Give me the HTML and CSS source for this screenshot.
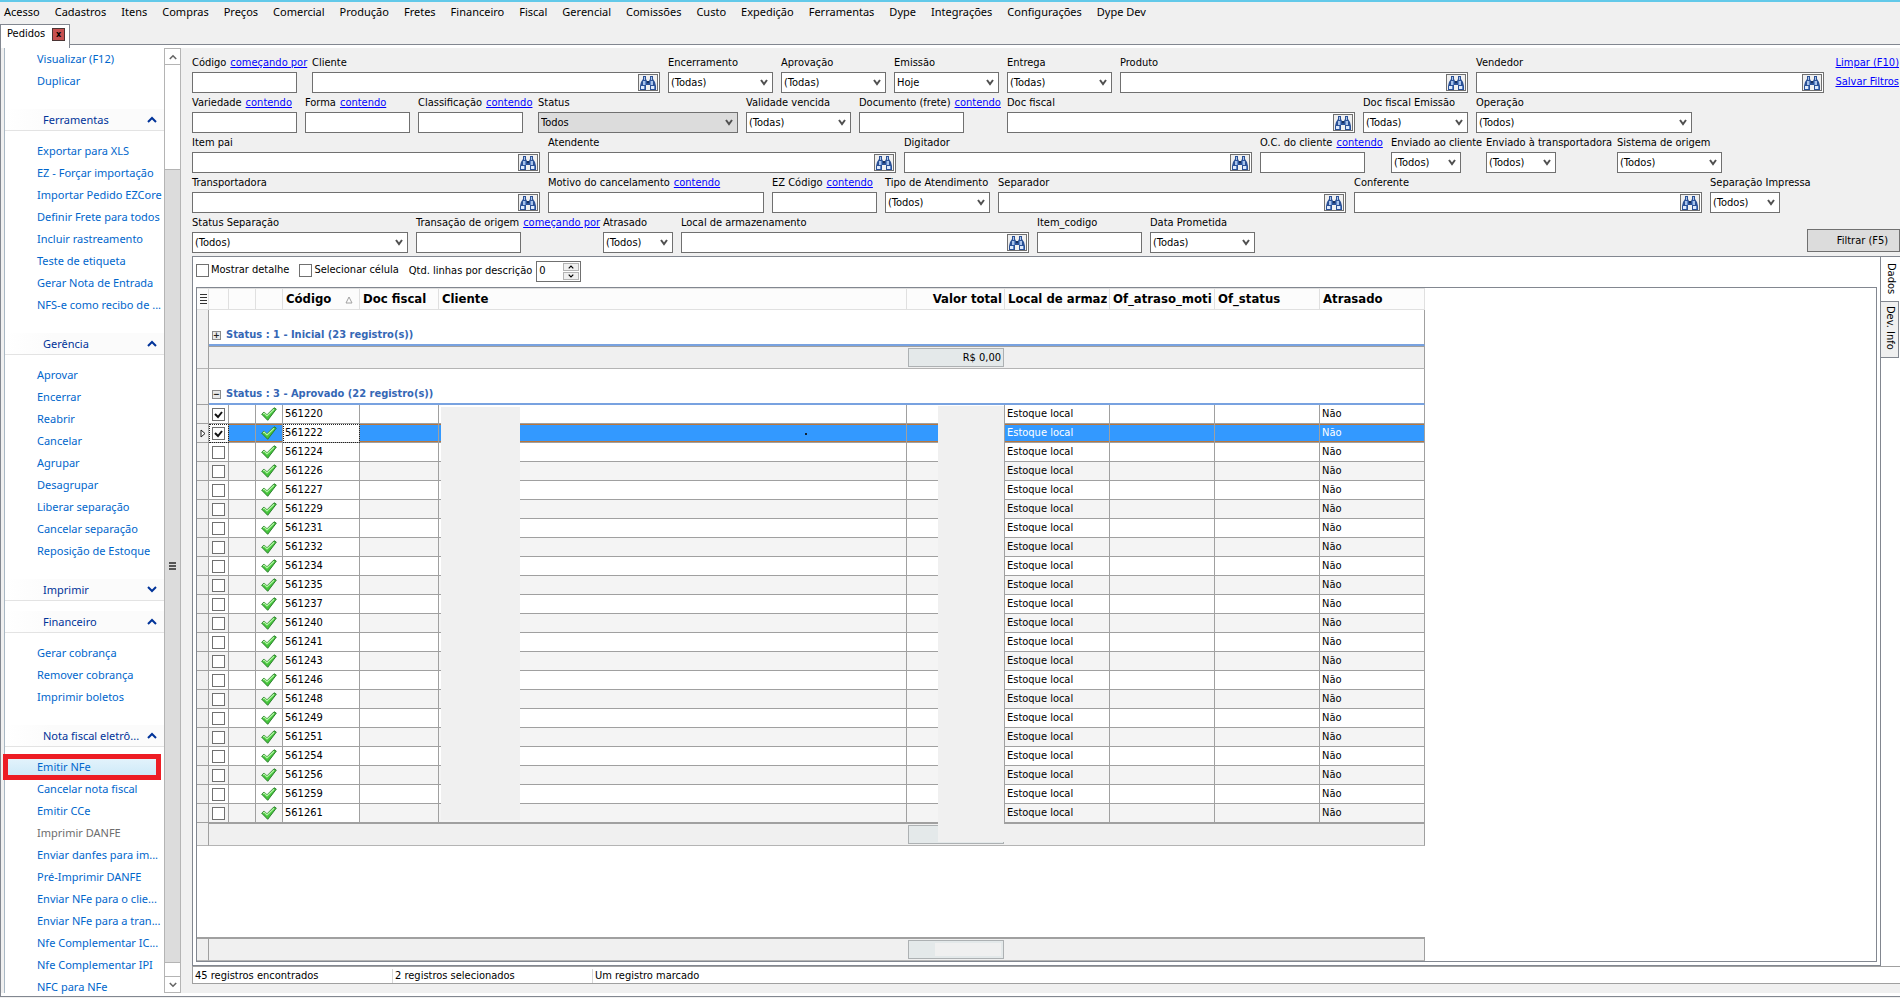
FILE: index.html
```html
<!DOCTYPE html>
<html lang="pt-BR">
<head>
<meta charset="utf-8">
<title>Pedidos</title>
<link rel="stylesheet" href="styles.css">
</head>
<body>
<svg class="defs" aria-hidden="true">
  <symbol id="find" viewBox="0 0 16 14">
    <path d="M3 0h3v3l1 2h2l1-2V0h3v3l2 3 1 4v4h-6V9H6v5H0v-4l1-4 2-3z" fill="#2b5196"/>
    <path d="M4 1h1v3H4zM11 1h1v3h-1zM3 5h2v4H3zM11 5h2v4h-2z" fill="#a9c3ea"/>
    <path d="M1 10h3v3H1zM11 10h3v3h-3z" fill="#dfeafb"/>
    <path d="M4 10h1v3H4zM14 10h1v3h-1zM5 5h1v4H5zM10 5h1v4h-1z" fill="#5c86c8"/>
    <path d="M7 5h2v2H7z" fill="#16305f"/>
  </symbol>
  <symbol id="ok" viewBox="0 0 16 14">
    <path d="M.7 7.200 3 5l3 2.800L13 .8l2.300 1.300L6.700 13.300z" fill="#46c63c" stroke="#2a7d2c" stroke-width="1" stroke-linejoin="round"/>
    <path d="M2 7l1.200-.9L6 9l7-6.800" fill="none" stroke="#b4f5a6" stroke-width="1.200"/>
  </symbol>
  <symbol id="up" viewBox="0 0 10 7"><path d="M1 6l4-4 4 4" fill="none" stroke="currentColor" stroke-width="2"/></symbol>
  <symbol id="down" viewBox="0 0 10 7"><path d="M1 1l4 4 4-4" fill="none" stroke="currentColor" stroke-width="2"/></symbol>
</svg>

<nav class="menu">
  <button>Acesso</button><button>Cadastros</button><button>Itens</button><button>Compras</button><button>Preços</button><button>Comercial</button><button>Produção</button><button>Fretes</button><button>Financeiro</button><button>Fiscal</button><button>Gerencial</button><button>Comissões</button><button>Custo</button><button>Expedição</button><button>Ferramentas</button><button>Dype</button><button>Integrações</button><button>Configurações</button><button>Dype Dev</button>
</nav>
<div class="tabs">
  <div class="tab">Pedidos <button class="close" aria-label="Fechar">x</button></div>
</div>

<div class="frame">
  <aside class="side">
    <div class="side-list">
      <ul class="first"><li><a href="#">Visualizar (F12)</a></li><li><a href="#">Duplicar</a></li></ul>
      <button class="sec"><span>Ferramentas</span><svg><use href="#up"/></svg></button>
      <ul>
        <li><a href="#">Exportar para XLS</a></li><li><a href="#">EZ - Forçar importação</a></li><li><a href="#">Importar Pedido EZCore</a></li><li><a href="#">Definir Frete para todos</a></li><li><a href="#">Incluir rastreamento</a></li><li><a href="#">Teste de etiqueta</a></li><li><a href="#">Gerar Nota de Entrada</a></li><li><a href="#">NFS-e como recibo de ...</a></li>
      </ul>
      <button class="sec"><span>Gerência</span><svg><use href="#up"/></svg></button>
      <ul>
        <li><a href="#">Aprovar</a></li><li><a href="#">Encerrar</a></li><li><a href="#">Reabrir</a></li><li><a href="#">Cancelar</a></li><li><a href="#">Agrupar</a></li><li><a href="#">Desagrupar</a></li><li><a href="#">Liberar separação</a></li><li><a href="#">Cancelar separação</a></li><li><a href="#">Reposição de Estoque</a></li>
      </ul>
      <button class="sec closed"><span>Imprimir</span><svg><use href="#down"/></svg></button>
      <button class="sec"><span>Financeiro</span><svg><use href="#up"/></svg></button>
      <ul>
        <li><a href="#">Gerar cobrança</a></li><li><a href="#">Remover cobrança</a></li><li><a href="#">Imprimir boletos</a></li>
      </ul>
      <button class="sec"><span>Nota fiscal eletrô...</span><svg><use href="#up"/></svg></button>
      <ul>
        <li class="hot"><a href="#">Emitir NFe</a></li><li><a href="#">Cancelar nota fiscal</a></li><li><a href="#">Emitir CCe</a></li><li class="off"><a href="#">Imprimir DANFE</a></li><li><a href="#">Enviar danfes para im...</a></li><li><a href="#">Pré-Imprimir DANFE</a></li><li><a href="#">Enviar NFe para o clie...</a></li><li><a href="#">Enviar NFe para a tran...</a></li><li><a href="#">Nfe Complementar IC...</a></li><li><a href="#">Nfe Complementar IPI</a></li><li><a href="#">NFC para NFe</a></li>
      </ul>
    </div>
    <div class="scroll">
      <button aria-label="Subir"><svg><use href="#up"/></svg></button>
      <div class="track"><div class="thumb"><i></i></div></div>
      <button aria-label="Descer"><svg><use href="#down"/></svg></button>
    </div>
  </aside>

  <main>
    <form class="filters">
      <div class="frow">
        <div class="f s112"><div class="cap"><label for="a1">Código</label><a href="#">começando por</a></div><input id="a1" class="w105"></div>
        <div class="f"><div class="cap"><label for="a2">Cliente</label></div><div class="look"><input id="a2"><button type="button" aria-label="Buscar"><svg><use href="#find"/></svg></button></div></div>
        <div class="f"><div class="cap"><label for="a3">Encerramento</label></div><select id="a3" class="w105"><option>(Todas)</option></select></div>
        <div class="f"><div class="cap"><label for="a4">Aprovação</label></div><select id="a4" class="w105"><option>(Todas)</option></select></div>
        <div class="f"><div class="cap"><label for="a5">Emissão</label></div><select id="a5" class="w105"><option>Hoje</option></select></div>
        <div class="f"><div class="cap"><label for="a6">Entrega</label></div><select id="a6" class="w105"><option>(Todas)</option></select></div>
        <div class="f"><div class="cap"><label for="a7">Produto</label></div><div class="look"><input id="a7"><button type="button" aria-label="Buscar"><svg><use href="#find"/></svg></button></div></div>
        <div class="f"><div class="cap"><label for="a8">Vendedor</label></div><div class="look"><input id="a8"><button type="button" aria-label="Buscar"><svg><use href="#find"/></svg></button></div></div>
        <div class="acts"><a href="#">Limpar (F10)</a><a href="#">Salvar Filtros</a></div>
      </div>
      <div class="frow">
        <div class="f s105"><div class="cap"><label for="b1">Variedade</label><a href="#">contendo</a></div><input id="b1" class="w105"></div>
        <div class="f s105"><div class="cap"><label for="b2">Forma</label><a href="#">contendo</a></div><input id="b2" class="w105"></div>
        <div class="f s112"><div class="cap"><label for="b3">Classificação</label><a href="#">contendo</a></div><input id="b3" class="w105"></div>
        <div class="f"><div class="cap"><label for="b4">Status</label></div><select id="b4" class="w200 gray"><option>Todos</option></select></div>
        <div class="f"><div class="cap"><label for="b5">Validade vencida</label></div><select id="b5" class="w105"><option>(Todas)</option></select></div>
        <div class="f s140"><div class="cap"><label for="b6">Documento (frete)</label><a href="#">contendo</a></div><input id="b6" class="w105"></div>
        <div class="f"><div class="cap"><label for="b7">Doc fiscal</label></div><div class="look"><input id="b7"><button type="button" aria-label="Buscar"><svg><use href="#find"/></svg></button></div></div>
        <div class="f s105"><div class="cap"><label for="b8">Doc fiscal Emissão</label></div><select id="b8" class="w105"><option>(Todas)</option></select></div>
        <div class="f"><div class="cap"><label for="b9">Operação</label></div><select id="b9" class="w216"><option>(Todos)</option></select></div>
      </div>
      <div class="frow">
        <div class="f"><div class="cap"><label for="c1">Item pai</label></div><div class="look"><input id="c1"><button type="button" aria-label="Buscar"><svg><use href="#find"/></svg></button></div></div>
        <div class="f"><div class="cap"><label for="c2">Atendente</label></div><div class="look"><input id="c2"><button type="button" aria-label="Buscar"><svg><use href="#find"/></svg></button></div></div>
        <div class="f"><div class="cap"><label for="c3">Digitador</label></div><div class="look"><input id="c3"><button type="button" aria-label="Buscar"><svg><use href="#find"/></svg></button></div></div>
        <div class="f s123"><div class="cap"><label for="c4">O.C. do cliente</label><a href="#">contendo</a></div><input id="c4" class="w105"></div>
        <div class="f s87"><div class="cap"><label for="c5">Enviado ao cliente</label></div><select id="c5" class="w70"><option>(Todos)</option></select></div>
        <div class="f s123"><div class="cap"><label for="c6">Enviado à transportadora</label></div><select id="c6" class="w70"><option>(Todos)</option></select></div>
        <div class="f"><div class="cap"><label for="c7">Sistema de origem</label></div><select id="c7" class="w105"><option>(Todos)</option></select></div>
      </div>
      <div class="frow">
        <div class="f"><div class="cap"><label for="d1">Transportadora</label></div><div class="look"><input id="d1"><button type="button" aria-label="Buscar"><svg><use href="#find"/></svg></button></div></div>
        <div class="f"><div class="cap"><label for="d2">Motivo do cancelamento</label><a href="#">contendo</a></div><input id="d2" class="w216"></div>
        <div class="f s105"><div class="cap"><label for="d3">EZ Código</label><a href="#">contendo</a></div><input id="d3" class="w105"></div>
        <div class="f s105"><div class="cap"><label for="d4">Tipo de Atendimento</label></div><select id="d4" class="w105"><option>(Todos)</option></select></div>
        <div class="f"><div class="cap"><label for="d5">Separador</label></div><div class="look"><input id="d5"><button type="button" aria-label="Buscar"><svg><use href="#find"/></svg></button></div></div>
        <div class="f"><div class="cap"><label for="d6">Conferente</label></div><div class="look"><input id="d6"><button type="button" aria-label="Buscar"><svg><use href="#find"/></svg></button></div></div>
        <div class="f"><div class="cap"><label for="d7">Separação Impressa</label></div><select id="d7" class="w70"><option>(Todos)</option></select></div>
      </div>
      <div class="frow">
        <div class="f"><div class="cap"><label for="e1">Status Separação</label></div><select id="e1" class="w216"><option>(Todos)</option></select></div>
        <div class="f s179"><div class="cap"><label for="e2">Transação de origem</label><a href="#">começando por</a></div><input id="e2" class="w105"></div>
        <div class="f"><div class="cap"><label for="e3">Atrasado</label></div><select id="e3" class="w70"><option>(Todos)</option></select></div>
        <div class="f"><div class="cap"><label for="e4">Local de armazenamento</label></div><div class="look"><input id="e4"><button type="button" aria-label="Buscar"><svg><use href="#find"/></svg></button></div></div>
        <div class="f"><div class="cap"><label for="e5">Item_codigo</label></div><input id="e5" class="w105"></div>
        <div class="f"><div class="cap"><label for="e6">Data Prometida</label></div><select id="e6" class="w105"><option>(Todas)</option></select></div>
        <button class="go" type="button">Filtrar (F5)</button>
      </div>
    </form>

    <section class="data">
      <div class="body">
        <div class="tools">
          <label><input type="checkbox"> Mostrar detalhe</label>
          <label><input type="checkbox"> Selecionar célula</label>
          <label class="qty">Qtd. linhas por descrição
            <span class="spin"><input value="0"><span><button type="button" aria-label="Mais"><svg><use href="#up"/></svg></button><button type="button" aria-label="Menos"><svg><use href="#down"/></svg></button></span></span>
          </label>
        </div>
        <div class="grid">
          <div class="sheet">
            <table class="tbl">
              <colgroup><col class="c0"><col class="c1"><col class="c2"><col class="c2"><col class="c3"><col class="c4"><col class="c5"><col class="c6"><col class="c7"><col class="c7"><col class="c7"><col class="c7"></colgroup>
              <thead><tr><th><i class="lines"></i></th><th></th><th></th><th></th><th>Código<svg class="sort" viewBox="0 0 8 8"><path d="M4 1L7 7H1z" fill="none" stroke="#a0a0a0"/></svg></th><th>Doc fiscal</th><th>Cliente</th><th class="r">Valor total</th><th><span class="clip">Local de armaze</span></th><th><span class="clip">Of_atraso_moti</span></th><th>Of_status</th><th>Atrasado</th></tr></thead>
              <tbody id="rows">
                <tr class="grp one"><td></td><td colspan="11"><button class="exp">+</button>Status : 1 - Inicial (23 registro(s))</td></tr>
                <tr class="sum top"><td></td><td colspan="6"></td><td><div class="box">R$ 0,00</div></td><td colspan="4"></td></tr>
                <tr class="grp"><td></td><td colspan="11"><button class="exp">−</button>Status : 3 - Aprovado (22 registro(s))</td></tr>
              </tbody>
              <tfoot><tr class="sum"><td></td><td colspan="6"></td><td><div class="box"></div></td><td colspan="4"></td></tr></tfoot>
            </table>
            <div class="mask m1"></div><div class="mask m2"></div><div class="dot"></div>
          </div>
          <table class="tbl foot">
            <colgroup><col class="c0"><col class="c1"><col class="c2"><col class="c2"><col class="c3"><col class="c4"><col class="c5"><col class="c6"><col class="c7"><col class="c7"><col class="c7"><col class="c7"></colgroup>
            <tbody><tr class="sum"><td></td><td colspan="6"></td><td><div class="box"><i></i></div></td><td colspan="4"></td></tr></tbody>
          </table>
        </div>
      </div>
      <div class="vtabs"><button class="on">Dados</button><button>Dev. Info</button></div>
    </section>
    <footer class="status"><span>45 registros encontrados</span><span>2 registros selecionados</span><span>Um registro marcado</span></footer>
  </main>
</div>
<script src="rows.js"></script>
</body>
</html>
```
FILE: rows.js
```js
const orders = [561220, 561222, 561224, 561226, 561227, 561229, 561231, 561232, 561234, 561235, 561237,
  561240, 561241, 561243, 561246, 561248, 561249, 561251, 561254, 561256, 561259, 561261];
const current = 561222;
const checked = [561220, 561222];
document.getElementById('rows').insertAdjacentHTML('beforeend', orders.map(n => {
  const sel = n === current;
  return `<tr class="row${sel ? ' sel' : ''}"><td>${sel ? '<svg class="cur" viewBox="0 0 6 9"><path d="M1 1l4 3.500-4 3.500z" fill="#fff" stroke="#222"/></svg>' : ''}</td>` +
    `<td><input type="checkbox" aria-label="Pedido ${n}"${checked.includes(n) ? ' checked' : ''}></td><td></td>` +
    `<td><svg class="ok"><use href="#ok"/></svg></td><td>${n}</td><td></td><td></td><td></td>` +
    `<td>Estoque local</td><td></td><td></td><td>Não</td></tr>`;
}).join(''));
```
FILE: styles.css
```css
* { box-sizing: border-box; }
body {
  margin: 0;
  height: 100vh;
  display: flex;
  flex-direction: column;
  background: #f0f0f0;
  color: #000;
  font: 11px/14px "DejaVu Sans Condensed", "DejaVu Sans", sans-serif;
  overflow: hidden;
}
.defs { display: none; }
button, input, select { font: inherit; color: inherit; margin: 0; padding: 0; border-radius: 0; }
button { background: none; border: 0; white-space: nowrap; }
ul { list-style: none; margin: 0; padding: 0; }
a { color: #0000ff; }

.menu {
  display: flex;
  gap: 15px;
  height: 24px;
  padding: 0 4px 2px;
  border-top: 2px solid #62c9e9;
  font: 11px/18px "Noto Sans", sans-serif;
}
.tabs { height: 24px; background: linear-gradient(#f0f0f0 20px, #828790 20px, #828790 21px, #fff 21px); }
.tab {
  display: flex;
  align-items: center;
  justify-content: space-between;
  width: 70px;
  height: 24px;
  padding: 0 4px 5px 6px;
  background: #fff;
  border: solid #828790;
  border-width: 1px 1px 0;
}
.close { width: 13px; height: 13px; background: #c75050; border: 1px solid #4a3434; font-weight: bold; font-size: 9px; line-height: 9px; }

.frame {
  flex: 1;
  min-height: 0;
  display: flex;
  margin-bottom: 1px;
  border-bottom: 1px solid #828790;
  border-left: 1px solid #828790;
  box-shadow: inset 0 -3px #fff;
  padding: 0 0 3px 3px;
}
.side { display: flex; width: 177px; flex: none; border-left: 1px solid #a9b8c4; background: #fff; }
.side-list { flex: 1; min-width: 0; font: 11px/22px "Noto Sans", sans-serif; }
.side-list ul { margin: 9px 0 17px; }
.side-list ul.first { margin-top: 0; }
.side-list li { height: 22px; padding-left: 32px; white-space: nowrap; }
.side-list a { color: #0066cc; text-decoration: none; }
.side-list .off a { color: #6d6d6d; }
.sec {
  display: flex;
  align-items: center;
  justify-content: space-between;
  width: 100%;
  height: 22px;
  padding: 0 7px 0 38px;
  background: linear-gradient(90deg, #fff, #fbfbfb 30%);
  border-bottom: 1px solid #e3e3e3;
  color: #003399;
}
.sec.closed { margin-bottom: 10px; }
.sec svg { width: 10px; height: 7px; }
.side-list .hot { margin-right: 5px; background: linear-gradient(#e6f4fc, #cbe8f8); outline: 5px solid #ed1c24; outline-offset: -3px; }
.scroll { width: 17px; display: flex; flex-direction: column; border: 1px solid #b4b4b4; background: #fff; color: #666; }
.scroll button { height: 16px; flex: none; border-bottom: 1px solid #b4b4b4; }
.scroll button:last-child { border: solid #b4b4b4; border-width: 1px 0 0; }
.scroll svg { width: 8px; height: 6px; }
.track { flex: 1; padding: 104px 0 13px; }
.thumb { height: 100%; background: #dcdcdc; border: solid #b4b4b4; border-width: 1px 0; display: grid; place-items: center; }
.thumb i { width: 7px; height: 8px; background: repeating-linear-gradient(#555 0 2px, transparent 2px 3px); }

main { flex: 1; min-width: 0; display: flex; flex-direction: column; padding: 0 0 9px 11px; }
.filters { display: grid; gap: 3px; padding: 8px 0 3px; }
.frow { display: flex; gap: 8px; height: 37px; }
.f { display: grid; grid-template-rows: 14px 21px; gap: 2px; flex: none; }
.cap { display: flex; gap: 4px; white-space: nowrap; }
.s105 { width: 105px; }
.s112 { width: 112px; }
.s140 { width: 140px; }
.s123 { width: 123px; }
.s87 { width: 87px; }
.s179 { width: 179px; }
.filters input, select { height: 21px; border: 1px solid #707070; background: #fff; outline: none; }
.w70 { width: 70px; }
.w105 { width: 105px; }
.w200 { width: 200px; }
.w216 { width: 216px; }
select {
  appearance: none;
  padding: 0 18px 0 2px;
  background: #fff url("data:image/svg+xml,%3Csvg xmlns='http://www.w3.org/2000/svg' width='8' height='7'%3E%3Cpath d='M1 1l3 4 3-4' fill='none' stroke='%23505050' stroke-width='2'/%3E%3C/svg%3E") no-repeat right 4px center;
}
select.gray { background-color: #dcdcdc; }
.look { display: flex; align-items: center; width: 348px; height: 21px; padding-right: 1px; border: 1px solid #707070; background: #fff; }
.filters .look input { flex: 1; border: 0; height: 17px; }
.look button { display: grid; place-items: center; width: 20px; height: 17px; border: 1px solid #707070; background: #f0f0f0; }
.look svg { width: 16px; height: 14px; }
.acts { margin-left: auto; display: grid; gap: 5px; text-align: right; white-space: nowrap; padding-right: 1px; align-content: start; }
.go { margin-left: auto; align-self: end; width: 93px; height: 23px; margin-bottom: 1px; padding-left: 18px; background: #dcdcdc; border: 1px solid #707070; }

.data { flex: 1; min-height: 0; display: flex; background: #fff; border-top: 1px solid #828790; }
.body { flex: 1; min-width: 0; display: flex; flex-direction: column; padding: 3px; border: solid #828790; border-width: 0 1px 1px; }
.tools { display: flex; height: 27px; align-items: start; }
.tools label { display: flex; gap: 2px; align-items: center; height: 20px; margin-right: 10px; white-space: nowrap; }
.tools .qty { gap: 4px; height: 22px; }
input[type=checkbox] { appearance: none; flex: none; width: 13px; height: 13px; border: 1px solid #707070; background: #fff; display: block; }
input[type=checkbox]:checked { background: #fff url("data:image/svg+xml,%3Csvg xmlns='http://www.w3.org/2000/svg' width='11' height='11'%3E%3Cpath d='M2 5l3 3 4-5' fill='none' stroke='%23111' stroke-width='2'/%3E%3C/svg%3E") center no-repeat; }
.spin { display: flex; width: 45px; height: 21px; border: 1px solid #707070; padding: 1px; }
.spin input { width: 25px; flex: 1; border: 0; outline: none; padding-left: 1px; background: #fff; }
.spin > span { display: grid; grid-template-rows: 8px 8px; gap: 1px; width: 16px; }
.spin button { border: 1px solid #b4b4b4; background: #f0f0f0; display: grid; place-items: center; }
.spin svg { width: 6px; height: 4px; }

.grid { flex: 1; min-height: 0; display: flex; flex-direction: column; justify-content: space-between; border: 1px solid #828790; }
.sheet { position: relative; width: 1228px; }
.tbl { width: 1228px; table-layout: fixed; border-collapse: separate; border-spacing: 0; }
.c0 { width: 12px; }
.c1 { width: 20px; }
.c2 { width: 27px; }
.c3 { width: 77px; }
.c4 { width: 79px; }
.c5 { width: 468px; }
.c6 { width: 98px; }
.c7 { width: 105px; }
th { height: 22px; padding: 0 2px 0 3px; text-align: left; font-size: 13px; white-space: nowrap; overflow: hidden; background: #fcfcfc; border: solid #e0e0e0; border-width: 1px 1px 1px 0; }
th.r { text-align: right; }
.clip { display: block; overflow: hidden; }
.sort { float: right; width: 8px; height: 8px; margin: 4px 4px 0 0; }
.lines { display: block; width: 7px; height: 10px; background: repeating-linear-gradient(#333 0 1px, transparent 1px 3px); }
td { height: 19px; padding: 0 2px; white-space: nowrap; border: solid #a0a0a0; border-width: 0 1px 1px 0; }
td:first-child { background: #f0f0f0; }
.row:nth-child(odd) td { background: #f4f4f4; }
.row td:nth-child(5) { background: #fff !important; }
.row:nth-child(even) td { background: #fff; }
.row td:first-child { background: #f0f0f0 !important; padding: 0 0 0 3px; }
.row td:nth-child(2) { padding: 0 0 0 3px; }
.row td:nth-child(4) { padding: 0 0 0 5px; }
.row.sel td { background: #3399ff; color: #fff; box-shadow: inset 0 1px #b8763c, inset 0 -1px #b8763c; }
.row.sel td:nth-child(2), .row.sel td:nth-child(5) { background: #fff !important; color: #000; box-shadow: none; outline: 1px dotted #222; outline-offset: -1px; }
.row.sel td:first-child { box-shadow: none; }
.cur { display: block; width: 6px; height: 9px; }
.ok { display: block; width: 16px; height: 14px; }
.grp td { height: 36px; padding: 16px 2px 0 3px; border-bottom: 2px solid #78a2e0; color: #3567b5; font-weight: bold; }
.grp td:first-child { border-bottom: 1px solid #a0a0a0; }
.grp.one td:first-child { border-bottom: 0; }
.exp { width: 9px; height: 9px; margin-right: 5px; border: 1px solid #8a8a8a; background: #e8e8e8; color: #222; font-size: 9px; line-height: 6px; vertical-align: 0; }
.sum td { height: 23px; padding: 1px 1px; background: #f0f0f0; border-right: 0; border-top: 1px solid #a0a0a0; border-bottom-color: #b4b4b4; }
.sum td:first-child, .sum td:last-child { border-right: 1px solid #a0a0a0; }
.sum.top td:first-child { border-top: 0; }
tfoot td:first-child { border-top: 0; }
.box { height: 19px; padding: 2px; border: 1px solid #adb1b3; background: #e4e9ea; text-align: right; }
.box i { display: block; width: 66px; height: 13px; margin-left: auto; background: #f0f0f0; }
.foot .sum td { border-top-width: 2px; }
.mask { position: absolute; background: #f0f0f0; }
.m1 { left: 244px; top: 119px; width: 79px; bottom: 26px; }
.m2 { left: 741px; top: 118px; width: 66px; bottom: 4px; }
.dot { position: absolute; left: 608px; top: 145px; width: 2px; height: 2px; background: #123; }

.vtabs { width: 19px; flex: none; display: flex; flex-direction: column; align-items: start; }
.vtabs button { writing-mode: vertical-rl; width: 18px; height: 57px; background: #f0f0f0; border: 1px solid #828790; border-left: 0; text-align: left; padding-top: 4px; }
.vtabs .on { height: 44px; width: 19px; padding-top: 6px; background: #fff; border: 0; }
.status { display: flex; height: 18px; background: #fff; border: solid #a0a0a0; border-width: 1px 0 1px 1px; }
.status span { width: 200px; margin: 2px 0 0; padding: 0 4px 0 2px; border-right: 1px solid #d7d7d7; }
.status span:last-child { border: 0; }
```
